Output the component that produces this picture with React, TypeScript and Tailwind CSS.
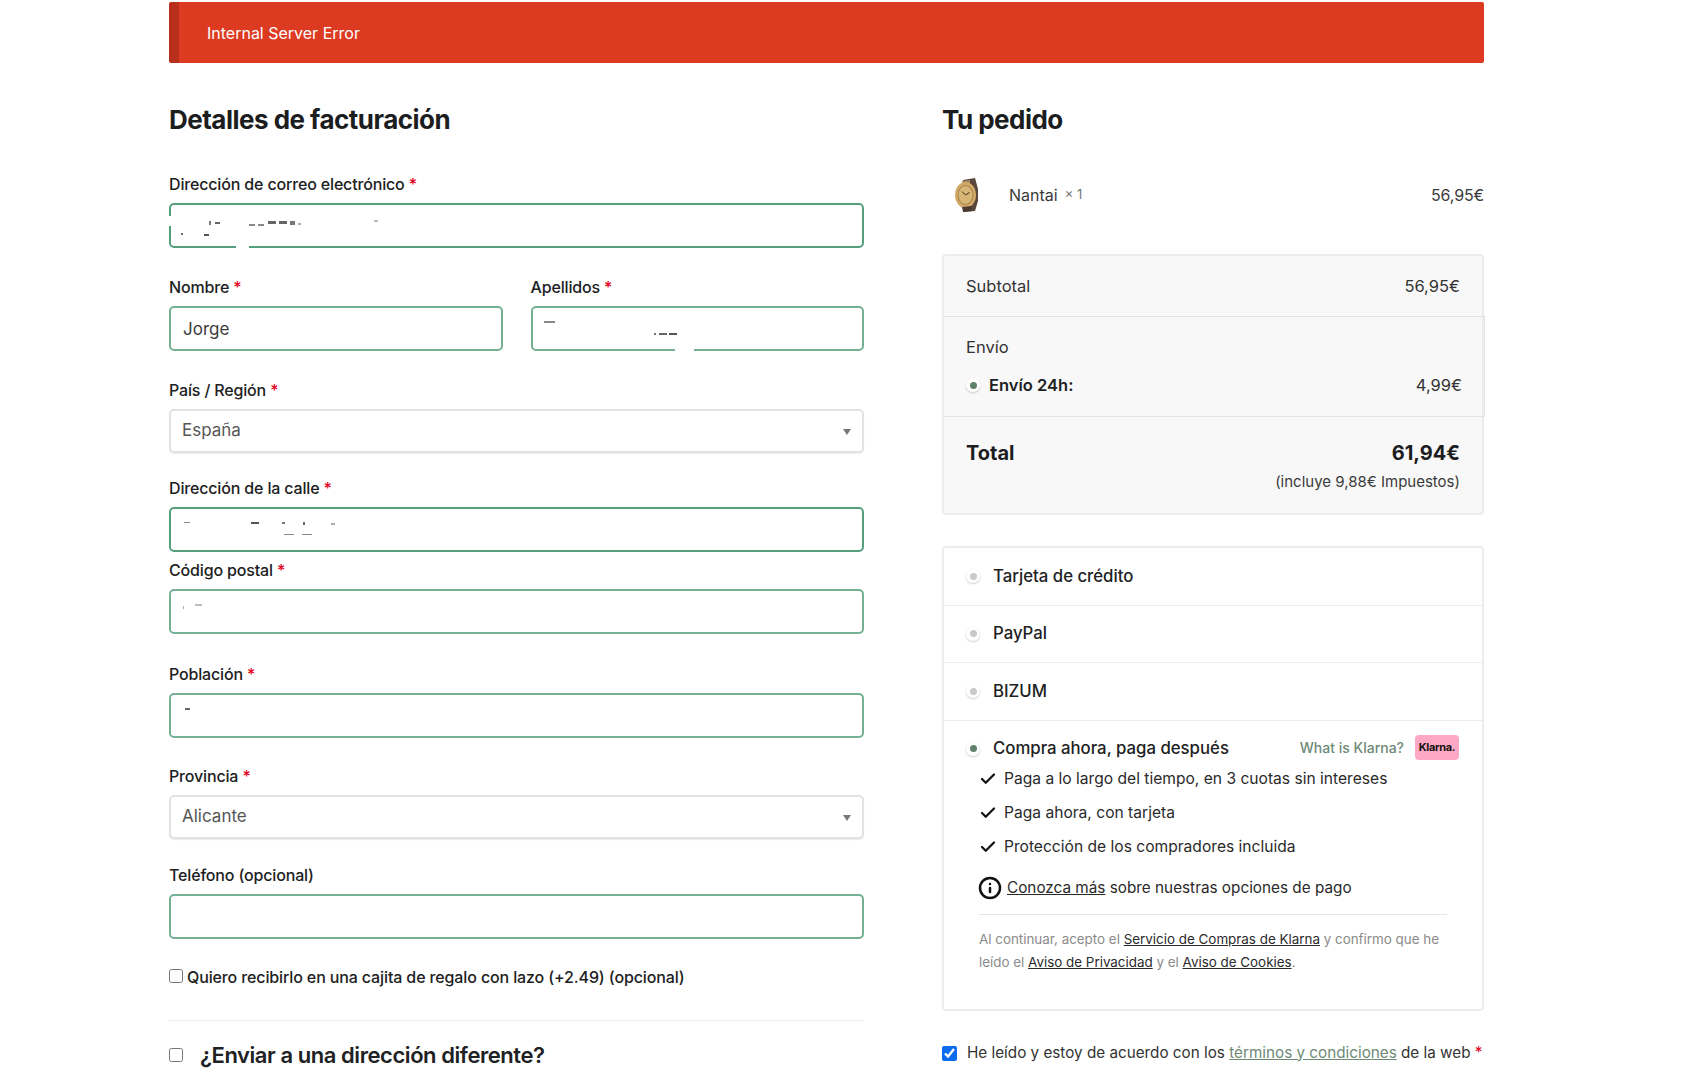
import { Check, Info } from "lucide-react";
import type { ReactNode } from "react";

const inputBase =
  "block w-full h-[45px] rounded-[5px] bg-white px-[12px] text-[17px] text-[#3d3d3d] outline-none border-2";

function Label({ text, required = true }: { text: string; required?: boolean }) {
  return (
    <label className="block h-6 mb-[7px] text-[16px] leading-6 font-medium tracking-[-0.01em] text-[#202122]">
      {text}
      {required && <span className="text-[#e2001a]"> *</span>}
    </label>
  );
}

function TextField({
  label,
  value = "",
  required = true,
  dark = false,
  className = "",
  children,
}: {
  label: string;
  value?: string;
  required?: boolean;
  dark?: boolean;
  className?: string;
  children?: ReactNode;
}) {
  return (
    <div className={className}>
      <Label text={label} required={required} />
      <div className="relative">
        <input
          defaultValue={value}
          className={`${inputBase} ${dark ? "border-[#55a07c]" : "border-[#74b093]"}`}
        />
        {children}
      </div>
    </div>
  );
}

function SelectField({ label, value, className = "" }: { label: string; value: string; className?: string }) {
  return (
    <div className={className}>
      <Label text={label} />
      <div className="relative">
        <select className="block w-full h-[44px] appearance-none rounded-[5px] border-2 border-[#e2e2e2] bg-white px-[11px] text-[17px] text-[#555555] shadow-[0_1px_1px_rgba(0,0,0,0.08)] outline-none">
          <option>{value}</option>
        </select>
        <span className="absolute right-[13px] top-[20px] w-0 h-0 border-x-[4px] border-x-transparent border-t-[6px] border-t-[#777777]" />
      </div>
    </div>
  );
}

function Radio({ on = false }: { on?: boolean }) {
  return (
    <span className="flex shrink-0 items-center justify-center w-[14px] h-[14px] rounded-full bg-white shadow-[0_1px_2px_rgba(0,0,0,0.2)]">
      <span className={`w-[7px] h-[7px] rounded-full ${on ? "bg-[#5f8069]" : "bg-[#c9c9c9]"}`} />
    </span>
  );
}

function Watch() {
  return (
    <svg width="26" height="36" viewBox="0 0 26 36" className="shrink-0">
      <path d="M9 3 L21 1 L24 12 L24 24 L21 34 L9 35 Z" fill="#5a473c" />
      <path d="M8 4 L16 3 L16 9 L9 10 Z" fill="#a08a6a" />
      <ellipse cx="11.5" cy="18" rx="10.5" ry="13" fill="#d2a965" />
      <ellipse cx="11.5" cy="18" rx="8" ry="10" fill="#a58450" />
      <ellipse cx="11.5" cy="18" rx="7" ry="9" fill="#d8b675" />
      <path d="M11.5 18 L8 14.5 M11.5 18 L15.5 15.5" stroke="#3a2c20" strokeWidth="1" />
      <path d="M8 30 L17 29 L18 34 L9 35 Z" fill="#4b3a30" />
    </svg>
  );
}

function PayRow({ label }: { label: string }) {
  return (
    <div className="flex h-[57.5px] items-center border-b border-[#ececec] pl-[22px]">
      <Radio />
      <span className="ml-[13px] text-[16.75px] font-medium text-[#202122]">{label}</span>
    </div>
  );
}

export default function App() {
  return (
    <div className="min-h-screen bg-white pt-[2px] pl-[169px] pr-[203px] font-[Inter,sans-serif] text-[#202122]">
      <div className="flex h-[61px] items-center rounded-[2px] border-l-[10px] border-[#b8301c] bg-[#dd3a22] pl-[28px] text-[16px] text-white">
        Internal Server Error
      </div>

      <div className="mt-[39px] flex gap-[78px]">
        {/* Billing form */}
        <div className="w-[695px] shrink-0">
          <h2 className="h-9 mb-[34px] text-[26px] leading-9 font-bold tracking-[-0.02em] text-[#1c1d1e]">
            Detalles de facturación
          </h2>

          <TextField label="Dirección de correo electrónico" dark>
            <span className="absolute left-[40px] top-[18px] w-[2px] h-[4px] bg-[#777777]" />
            <span className="absolute left-[46px] top-[19px] w-[5px] h-[2px] bg-[#666666]" />
            <span className="absolute left-[80px] top-[21px] w-[6px] h-[2px] bg-[#888888]" />
            <span className="absolute left-[89px] top-[21px] w-[6px] h-[2px] bg-[#888888]" />
            <span className="absolute left-[99px] top-[18px] w-[8px] h-[3px] bg-[#666666]" />
            <span className="absolute left-[110px] top-[18px] w-[8px] h-[3px] bg-[#666666]" />
            <span className="absolute left-[121px] top-[18px] w-[5px] h-[4px] bg-[#777777]" />
            <span className="absolute left-[129px] top-[20px] w-[3px] h-[2px] bg-[#aaaaaa]" />
            <span className="absolute left-[12px] top-[30px] w-[2px] h-[2px] bg-[#666666]" />
            <span className="absolute left-[35px] top-[31px] w-[5px] h-[2px] bg-[#555555]" />
            <span className="absolute left-[205px] top-[17px] w-[4px] h-[2px] bg-[#bbbbbb]" />
            <span className="absolute left-0 top-[13px] w-[3px] h-[10px] bg-white" />
            <span className="absolute left-[67px] bottom-0 w-[13px] h-[3px] bg-white" />
          </TextField>

          <div className="mt-[27px] flex gap-[28px]">
            <TextField label="Nombre" value="Jorge" className="flex-1" />
            <TextField label="Apellidos" className="flex-1">
              <span className="absolute left-[13px] top-[15px] w-[11px] h-[2px] bg-[#888888]" />
              <span className="absolute left-[123px] top-[27px] w-[2px] h-[2px] bg-[#777777]" />
              <span className="absolute left-[128px] top-[27px] w-[8px] h-[2px] bg-[#666666]" />
              <span className="absolute left-[138px] top-[27px] w-[8px] h-[2px] bg-[#555555]" />
              <span className="absolute left-[144px] bottom-0 w-[19px] h-[3px] bg-white" />
            </TextField>
          </div>

          <SelectField label="País / Región" value="España" className="mt-[27px]" />

          <TextField label="Dirección de la calle" dark className="mt-[23px]">
            <span className="absolute left-[15px] top-[15px] w-[6px] h-[1px] bg-[#888888]" />
            <span className="absolute left-[82px] top-[15px] w-[8px] h-[2px] bg-[#555555]" />
            <span className="absolute left-[113px] top-[15px] w-[3px] h-[2px] bg-[#777777]" />
            <span className="absolute left-[134px] top-[15px] w-[2px] h-[3px] bg-[#666666]" />
            <span className="absolute left-[162px] top-[16px] w-[4px] h-[2px] bg-[#aaaaaa]" />
            <span className="absolute left-[115px] top-[27px] w-[10px] h-[1px] bg-[#888888]" />
            <span className="absolute left-[133px] top-[27px] w-[10px] h-[1px] bg-[#888888]" />
          </TextField>

          <TextField label="Código postal" className="mt-[6px]">
            <span className="absolute left-[14px] top-[17px] w-[1px] h-[3px] bg-[#aaaaaa]" />
            <span className="absolute left-[26px] top-[15px] w-[7px] h-[2px] bg-[#bbbbbb]" />
          </TextField>

          <TextField label="Población" className="mt-[28px]">
            <span className="absolute left-[16px] top-[15px] w-[5px] h-[2px] bg-[#666666]" />
          </TextField>

          <SelectField label="Provincia" value="Alicante" className="mt-[26px]" />

          <TextField label="Teléfono (opcional)" required={false} className="mt-[24px]" />

          <label className="mt-[26px] flex h-6 items-center text-[16px] font-medium tracking-[-0.008em] text-[#202122]">
            <input type="checkbox" className="w-[14px] h-[14px] m-0 -mt-[3px] mr-[4px]" />
            Quiero recibirlo en una cajita de regalo con lazo (+2.49) (opcional)
          </label>

          <div className="mt-[31px] h-px bg-[#ececec]" />

          <label className="mt-[16px] flex h-9 items-center text-[22px] font-semibold tracking-[-0.02em] text-[#202122]">
            <input type="checkbox" className="w-[14px] h-[14px] m-0 mr-[17px]" />
            ¿Enviar a una dirección diferente?
          </label>
        </div>

        {/* Order summary */}
        <div className="w-[542px] shrink-0">
          <h2 className="h-9 text-[26px] leading-9 font-bold tracking-[-0.02em] text-[#1c1d1e]">Tu pedido</h2>

          <div className="mt-[37px] flex h-10 items-center pl-[12px]">
            <Watch />
            <span className="ml-[29px] text-[16px] text-[#3a3a3a]">Nantai</span>
            <span className="ml-[7px] text-[13px] text-[#777777]">× 1</span>
            <span className="ml-auto text-[16px] tracking-[-0.01em] text-[#3a3a3a]">56,95€</span>
          </div>

          <div className="mt-[39px] rounded-[4px] border-2 border-[#ececec] bg-[#f8f8f8]">
            <div className="flex h-[60px] items-center justify-between px-[22px] text-[16.5px] text-[#333333]">
              <span>Subtotal</span>
              <span>56,95€</span>
            </div>
            <div className="-mr-[3px] h-[101px] border-y border-r border-[#e3e3e3] px-[22px] pt-[18px] text-[16.5px] text-[#333333]">
              <div className="leading-6">Envío</div>
              <div className="mt-[14px] flex h-6 items-center">
                <Radio on />
                <span className="ml-[9px] font-semibold text-[#202122]">Envío 24h:</span>
                <span className="ml-auto">4,99€</span>
              </div>
            </div>
            <div className="px-[22px] pt-[22px]">
              <div className="flex h-7 items-center justify-between text-[20px] font-bold text-[#1c1d1e]">
                <span>Total</span>
                <span>61,94€</span>
              </div>
              <div className="mt-[3px] h-[43px] text-right text-[15px] leading-6 text-[#3a3a3a]">
                (incluye 9,88€ Impuestos)
              </div>
            </div>
          </div>

          <div className="mt-[31px] rounded-[4px] border-2 border-[#ececec] bg-white">
            <PayRow label="Tarjeta de crédito" />
            <PayRow label="PayPal" />
            <PayRow label="BIZUM" />
            <div className="pt-[16px] pb-[36px]">
              <div className="flex h-6 items-center pl-[22px] pr-[23px]">
                <Radio on />
                <span className="ml-[13px] text-[16.75px] font-medium text-[#202122]">Compra ahora, paga después</span>
                <span className="ml-auto -mt-[3px] text-[14px] font-medium text-[#6e8a76]">What is Klarna?</span>
                <span className="ml-[11px] -mt-[3px] flex h-[25px] w-[44px] items-center justify-center rounded-[4px] bg-[#ffa8c6] text-[11px] font-bold tracking-[-0.03em] text-[#17120f]">
                  Klarna.
                </span>
              </div>
              <ul className="mt-[6px] flex flex-col gap-[10.3px] pl-[35px]">
                {[
                  "Paga a lo largo del tiempo, en 3 cuotas sin intereses",
                  "Paga ahora, con tarjeta",
                  "Protección de los compradores incluida",
                ].map((item) => (
                  <li key={item} className="flex h-6 items-center text-[15.6px] text-[#2a2a2a]">
                    <Check size={18} strokeWidth={3} className="mr-[7px] text-[#111111]" />
                    {item}
                  </li>
                ))}
              </ul>
              <div className="mx-[34px] mt-[17px] flex h-[24px] items-center text-[15.3px] text-[#2a2a2a]">
                <Info size={24} strokeWidth={2.5} className="mr-[5px] text-[#111111]" />
                <span>
                  <a className="underline">Conozca más</a> sobre nuestras opciones de pago
                </span>
              </div>
              <div className="mx-[35px] mt-[14px] h-px bg-[#e6e6e6]" />
              <p className="mx-[35px] mt-[13px] text-[13.4px] leading-[22.5px] text-[#8a8a8a]">
                Al continuar, acepto el <a className="text-[#2a2a2a] underline">Servicio de Compras de Klarna</a> y
                confirmo que he leído el <a className="text-[#2a2a2a] underline">Aviso de Privacidad</a> y el{" "}
                <a className="text-[#2a2a2a] underline">Aviso de Cookies</a>.
              </p>
            </div>
          </div>

          <label className="mt-[30px] flex h-6 items-center whitespace-nowrap text-[15.25px] text-[#333333]">
            <input type="checkbox" defaultChecked className="w-[15px] h-[15px] m-0 mr-[10px] accent-[#0b6cf0]" />
            <span>
              He leído y estoy de acuerdo con los{" "}
              <a className="text-[#6e8a76] underline">términos y condiciones</a> de la web{" "}
              <span className="text-[#e2001a]">*</span>
            </span>
          </label>
        </div>
      </div>
    </div>
  );
}
